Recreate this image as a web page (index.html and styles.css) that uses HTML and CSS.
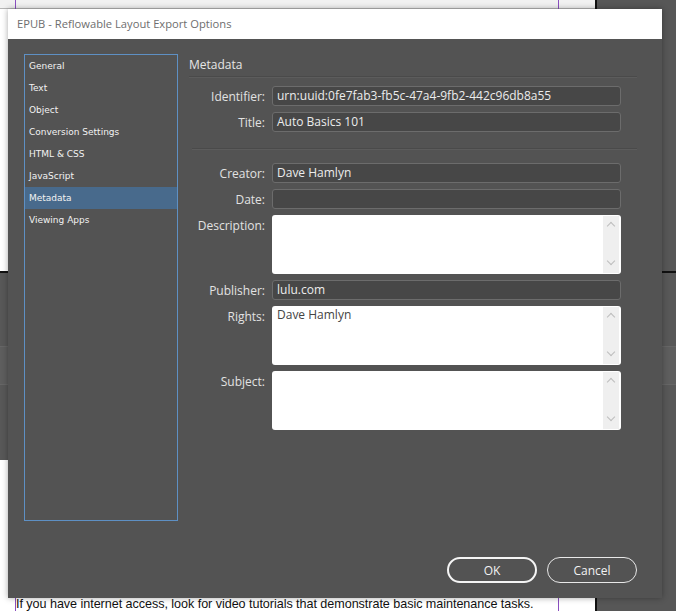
FILE: index.html
```html
<!DOCTYPE html>
<html>
<head>
<meta charset="utf-8">
<link rel="stylesheet" href="styles.css">
</head>
<body>
<div class="scene">
  <div class="page-top"></div>
  <div class="band"><div class="band-light"></div></div>
  <div class="margin-line left"></div>
  <div class="margin-line right"></div>
  <div class="page-edge"></div>
  <p class="doc-text">If you have internet access, look for video tutorials that demonstrate basic maintenance tasks.</p>

  <div class="dialog">
    <div class="titlebar">EPUB - Reflowable Layout Export Options</div>
    <div class="dialog-body">
      <div class="main">
        <ul class="nav">
          <li>General</li>
          <li>Text</li>
          <li>Object</li>
          <li>Conversion Settings</li>
          <li>HTML &amp; CSS</li>
          <li>JavaScript</li>
          <li class="selected">Metadata</li>
          <li>Viewing Apps</li>
        </ul>
        <div class="panel">
          <h2 class="panel-title">Metadata</h2>
          <div class="form">
            <label>Identifier:</label><div class="field">urn:uuid:0fe7fab3-fb5c-47a4-9fb2-442c96db8a55</div>
            <label>Title:</label><div class="field">Auto Basics 101</div>
          </div>
          <div class="sep"></div>
          <div class="form">
            <label>Creator:</label><div class="field">Dave Hamlyn</div>
            <label>Date:</label><div class="field"></div>
            <label class="top">Description:</label><div class="area"><div class="area-text"></div><div class="scroll"><span class="chev up"></span><span class="chev down"></span></div></div>
            <label>Publisher:</label><div class="field">lulu.com</div>
            <label class="top">Rights:</label><div class="area"><div class="area-text">Dave Hamlyn</div><div class="scroll"><span class="chev up"></span><span class="chev down"></span></div></div>
            <label class="top">Subject:</label><div class="area"><div class="area-text"></div><div class="scroll"><span class="chev up"></span><span class="chev down"></span></div></div>
          </div>
        </div>
      </div>
      <div class="buttons">
        <button class="btn default">OK</button>
        <button class="btn">Cancel</button>
      </div>
    </div>
  </div>
</div>
</body>
</html>
```
FILE: styles.css
```css
html, body {
  margin: 0;
  padding: 0;
}
body {
  width: 676px;
  height: 611px;
  overflow: hidden;
  background: #575757;
  font-family: "Open Sans", "Noto Sans", sans-serif;
}
.scene {
  position: relative;
  width: 676px;
  height: 611px;
  background: linear-gradient(to right, #ffffff 0, #ffffff 595px, #111 595px, #111 597px, #575757 597px);
}
.page-top {
  position: absolute;
  left: 0;
  top: 0;
  width: 595px;
  height: 8px;
  background: #f1f1f1;
  border-bottom: 1px solid #b5b5b5;
}
.band {
  position: absolute;
  left: 0;
  top: 271px;
  width: 676px;
  height: 187px;
  background: #585858;
  border-top: 2px solid #111;
}
.band-light {
  position: absolute;
  left: 0;
  top: 73px;
  width: 676px;
  height: 37px;
  background: #5e5e5e;
  border-top: 1px solid #666;
  border-bottom: 1px solid #666;
}
.margin-line {
  position: absolute;
  top: 0;
  width: 1px;
  height: 611px;
  background: #8a4fc0;
}
.margin-line.left { left: 15px; }
.margin-line.right { left: 558px; }
.page-edge {
  position: absolute;
  left: 595px;
  top: 0;
  width: 2px;
  height: 611px;
  background: #111;
}
.doc-text {
  position: absolute;
  left: 16px;
  top: 597px;
  margin: 0;
  font-family: "Liberation Sans", Arial, sans-serif;
  font-size: 12.6px;
  letter-spacing: -0.05px;
  color: #111;
  white-space: nowrap;
}

.dialog {
  position: absolute;
  left: 8px;
  top: 9px;
  width: 654px;
  height: 589px;
  display: flex;
  flex-direction: column;
  background: #535353;
  box-shadow: 0 0 6px rgba(0, 0, 0, 0.35);
}
.titlebar {
  height: 30px;
  flex: none;
  background: #ffffff;
  color: #6e6e6e;
  font-size: 11.2px;
  line-height: 30px;
  padding-left: 9px;
}
.dialog-body {
  flex: 1;
  display: flex;
  flex-direction: column;
  padding: 15px 25px 15px 16px;
}
.main {
  display: flex;
  gap: 11px;
  flex: 1;
}
.nav {
  list-style: none;
  margin: 0;
  padding: 0;
  width: 152px;
  height: 465px;
  border: 1px solid #5e90c4;
  font-family: "DejaVu Sans", Tahoma, sans-serif;
  font-size: 9px;
  color: #f2f2f2;
}
.nav li {
  height: 22px;
  line-height: 22px;
  padding-left: 4px;
}
.nav li.selected {
  background: #486a8c;
}
.panel {
  flex: 1;
  display: flex;
  flex-direction: column;
}
.panel-title {
  margin: 0;
  font-size: 12px;
  font-weight: normal;
  color: #e6e6e6;
  line-height: 22px;
  border-bottom: 1px solid #4a4a4a;
  box-shadow: 0 1px 0 #5c5c5c;
}
.form {
  display: grid;
  grid-template-columns: 76px 349px;
  column-gap: 7px;
  row-gap: 6px;
  align-items: center;
}
.form label {
  text-align: right;
  font-size: 12px;
  color: #e2e2e2;
  white-space: nowrap;
}
.form label.top {
  align-self: start;
  padding-top: 2px;
}
.panel .form:first-of-type {
  margin-top: 9px;
}
.sep {
  height: 1px;
  background: #4a4a4a;
  box-shadow: 0 1px 0 #5c5c5c;
  margin: 16px 0 14px 3px;
}
.field {
  box-sizing: border-box;
  height: 20px;
  background: #474747;
  border: 1px solid #6c6c6c;
  border-radius: 3px;
  color: #ececec;
  font-size: 12px;
  line-height: 18px;
  padding-left: 4px;
  white-space: nowrap;
  overflow: hidden;
}
.area {
  box-sizing: border-box;
  height: 59px;
  background: #ffffff;
  border-radius: 3px;
  display: flex;
}
.area-text {
  flex: 1;
  color: #444;
  font-size: 12px;
  line-height: 18px;
  padding: 0 5px;
}
.scroll {
  width: 16px;
  margin: 1px 2px 1px 0;
  background: #efefef;
  display: flex;
  flex-direction: column;
  justify-content: space-between;
  align-items: center;
  padding: 5px 0;
  box-sizing: border-box;
}
.chev {
  width: 5px;
  height: 5px;
  border-left: 1.5px solid #bdbdbd;
  border-top: 1.5px solid #bdbdbd;
}
.chev.up { transform: translateY(2px) rotate(45deg); }
.chev.down { transform: translateY(-4px) rotate(225deg); }
.buttons {
  display: flex;
  justify-content: flex-end;
  gap: 10px;
}
.btn {
  box-sizing: border-box;
  width: 90px;
  height: 26px;
  border-radius: 13px;
  border: 1px solid #e8e8e8;
  background: transparent;
  color: #f2f2f2;
  font-family: "Open Sans", "Noto Sans", sans-serif;
  font-size: 12px;
  padding: 0;
}
.btn.default {
  border: 2px solid #f5f5f5;
}
```
